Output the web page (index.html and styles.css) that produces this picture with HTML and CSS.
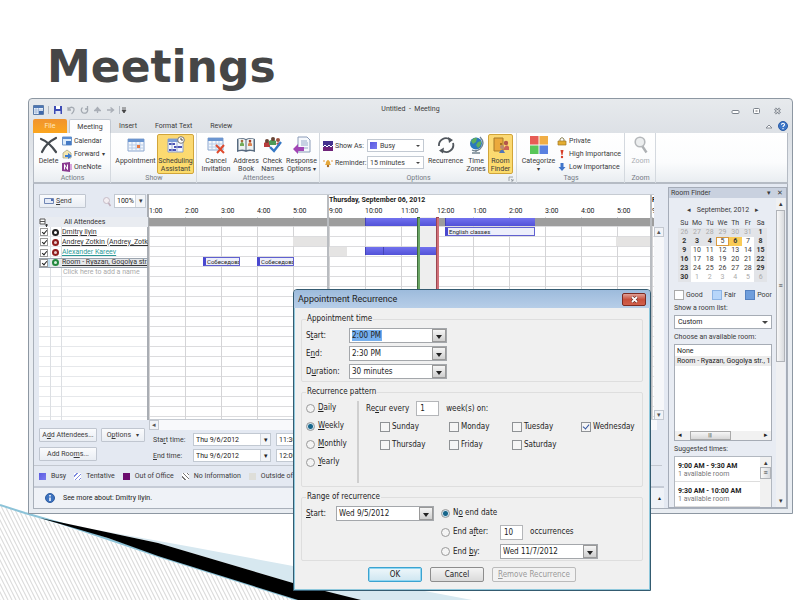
FILE: index.html
```html
<!DOCTYPE html>
<html lang="en">
<head>
<meta charset="utf-8">
<title>Meetings</title>
<link rel="stylesheet" href="styles.css">
</head>
<body>
<main class="slide">
<svg class="swoosh" viewBox="0 0 800 600" preserveAspectRatio="none" aria-hidden="true">
  <defs><pattern id="hatch" width="4" height="8" patternUnits="userSpaceOnUse"><path d="M0 0l4 8M-4 0l4 8M4 0l4 8" stroke="#dcdcdc" stroke-width="1.2"/></pattern></defs>
  <path d="M0 505L45 520L158 557L298 600H0z" fill="url(#hatch)"/>
  <path d="M45 519L81 527L192 547L293 566L472 600H350L158 543z" fill="#d7e8f0"/>
  <path d="M0 505L25 513L60 523L158 556L298 600" fill="none" stroke="#8cc3d8" stroke-width="2"/>
  <path d="M40 518L158 543L293 583L361 600H298L158 556L108 538z" fill="#000"/>
</svg>
<h1 class="title">Meetings</h1>

<section class="window">
  <header class="titlebar">
    <div class="quick">
      <svg width="11" height="10" viewBox="0 0 11 10"><path d="M.5.5h10v9H.5z" fill="#e8f0fa" stroke="#5b7ba8"/><path d="M1 1h9v2H1z" fill="#4d76b3"/><path d="M3 3v6M5.500 3v6M1 5h9M1 7h9" stroke="#8aa5cc" stroke-width=".6"/><path d="M6 6h4v3H6z" fill="#3f68ab"/></svg>
      <i class="bar"></i>
      <svg width="10" height="10" viewBox="0 0 10 10"><path d="M1 1h8v8H1z" fill="#3e4db5"/><path d="M3 1h4v3H3z" fill="#fff"/><path d="M2.500 6h5v3h-5z" fill="#dfe5f7"/></svg>
      <svg width="9" height="10" viewBox="0 0 9 10"><path d="M1 2v3h3M1.500 4.500C3 1 7.500 2 7 5 6.800 7 5.500 8 4.500 9" fill="none" stroke="#a3a9b1" stroke-width="1.300"/></svg>
      <svg width="9" height="10" viewBox="0 0 9 10"><path d="M2.500 2.500A3.200 3.200 0 1 0 6.800 2.800M7.500 1v3H5" fill="none" stroke="#a3a9b1" stroke-width="1.300"/></svg>
      <svg width="9" height="10" viewBox="0 0 9 10"><path d="M1 5.500h7M4.500 3v5M2.500 5l2-2.500 2 2.500" fill="none" stroke="#a9aeb6" stroke-width="1.300"/></svg>
      <svg width="9" height="10" viewBox="0 0 9 10"><path d="M1 5h6M4.500 2.500L7.500 5l-3 2.500" fill="none" stroke="#a9aeb6" stroke-width="1.400"/></svg>
      <i class="bar"></i>
      <svg class="tight" width="6" height="8" viewBox="0 0 6 8"><path d="M1 2h4M1 4h4L3 7z" fill="#444" stroke="#444" stroke-width=".8"/></svg>
    </div>
    <span class="caption">Untitled&nbsp; -&nbsp; Meeting</span>
    <div class="sysbuttons">
      <button type="button" aria-label="Minimize"><svg width="9" height="8"><rect x="1" y="3.500" width="7" height="3" rx="1" fill="#fff" stroke="#7b828b"/></svg></button>
      <button type="button" aria-label="Maximize"><svg width="9" height="8"><rect x="1.500" y="1.500" width="6" height="5" rx="1" fill="#fff" stroke="#7b828b"/><path d="M3.500 4h2" stroke="#666"/></svg></button>
      <button type="button" aria-label="Close"><svg width="9" height="8"><path d="M2 1.500l5 5M7 1.500l-5 5" stroke="#7b828b" stroke-width="2.500"/><path d="M2 1.500l5 5M7 1.500l-5 5" stroke="#fff"/></svg></button>
    </div>
  </header>
  <nav class="tabs">
    <button type="button" class="file">File</button><button type="button" class="on">Meeting</button><button type="button">Insert</button><button type="button">Format Text</button><button type="button">Review</button>
    <span class="help"><svg width="8" height="8"><path d="M1 6l3-3 3 3z" fill="#fff" stroke="#858b94"/></svg><svg width="10" height="10"><circle cx="5" cy="5" r="4.500" fill="#3d77c8" stroke="#2a5ba3"/><path d="M3.500 3.800c0-2 3-2 3-.1 0 1.200-1.500 1-1.500 2.400M5 7v1.200" fill="none" stroke="#fff" stroke-width="1.100"/></svg></span>
  </nav>

  <div class="ribbon">
    <section class="group"><div class="tools actions">
      <button type="button" class="big"><svg width="20" height="18" viewBox="0 0 20 18"><path d="M2 3Q10 6 17 16M17 2Q7 7 3 16" fill="none" stroke="#444a50" stroke-width="2.200" stroke-linecap="round"/></svg>Delete</button>
      <div class="stack">
        <button type="button"><svg width="10" height="10" viewBox="0 0 10 10"><path d="M.5 1h9v8h-9z" fill="#dcecfb" stroke="#6d94c9"/><path d="M.5 1h9v2h-9z" fill="#5b8dd0"/><path d="M4 5h5v4H4z" fill="#4479c4"/></svg>Calendar</button>
        <button type="button"><svg width="10" height="10" viewBox="0 0 10 10"><path d="M1 4l4-3 4 3v5H1z" fill="#f5e7b0" stroke="#9b9b80" stroke-width=".7"/><path d="M3 6h3V4l4 3-4 3V8H3z" fill="#3c7cd0"/></svg>Forward <em>▾</em></button>
        <button type="button"><svg width="10" height="10" viewBox="0 0 10 10"><path d="M0 1l8-1v10l-8-1z" fill="#8b3b91"/><path d="M8 2h2v6H8z" fill="#d9a6dd"/><path d="M2.500 7.500v-5l3 5v-5" fill="none" stroke="#fff"/></svg>OneNote</button>
      </div></div><h2>Actions</h2></section>
    <section class="group"><div class="tools show">
      <button type="button" class="big"><svg width="18" height="18" viewBox="0 0 18 18"><path d="M1 3h16v12H1z" fill="#f3f7fc" stroke="#8aa6cf"/><path d="M1 3h16v3H1z" fill="#6b95d0"/><path d="M5 6v9M9 6v9M13 6v9M1 9h16M1 12h16" stroke="#b8cbe6"/><path d="M10 9h3v3h-3z" fill="#e6783e"/></svg>Appointment</button>
      <button type="button" class="big hot"><svg width="18" height="18" viewBox="0 0 18 18"><path d="M1 3h15v13H1z" fill="#f5f8fd" stroke="#8aa0cc"/><path d="M1 3h15v3H1z" fill="#7a9bd6"/><path d="M2 8h6M7 11h8M2 14h7" stroke="#4b53b5" stroke-width="2"/><path d="M5 6v10M10 6v10" stroke="#a8b6d8"/><circle cx="14" cy="4" r="3.300" fill="#fff" stroke="#777"/><path d="M14 2v2h2" fill="none" stroke="#444"/></svg>Scheduling<br>Assistant</button>
    </div><h2>Show</h2></section>
    <section class="group"><div class="tools attend">
      <button type="button" class="big"><svg width="18" height="18" viewBox="0 0 18 18"><path d="M1 2h15v12H1z" fill="#f3f7fc" stroke="#8aa6cf"/><path d="M1 2h15v3H1z" fill="#6b95d0"/><path d="M5 5v9M9 5v9M12 5v9M1 8h15M1 11h15" stroke="#b8cbe6"/><path d="M9 9l8 8M17 9l-7 8" stroke="#df4a2d" stroke-width="2"/></svg>Cancel<br>Invitation</button>
      <button type="button" class="big"><svg width="18" height="18" viewBox="0 0 18 18"><path d="M0 3q5-2 9 0 4-2 9 0v13q-5-2-9 0-4-2-9 0z" fill="#586b80"/><path d="M1.500 3q4-1 7 1v10q-3-1-7 0zM16.500 3q-4-1-7 1v10q3-1 7 0z" fill="#eef2f2"/><path d="M3 8q2-4 4 0v2H3z" fill="#72ab58"/><path d="M11 8q2-4 4 0v2h-4z" fill="#dc8352"/><circle cx="5" cy="5" r="1.300" fill="#a56a3d"/><circle cx="13" cy="5" r="1.300" fill="#a83d28"/></svg>Address<br>Book</button>
      <button type="button" class="big"><svg width="20" height="18" viewBox="0 0 20 18"><path d="M1 11V7q3-3 6 0v4z" fill="#b83d3d"/><path d="M6 9V5q4-3 7 0v4z" fill="#4d9a58"/><circle cx="4" cy="5" r="2" fill="#674536"/><circle cx="10" cy="3" r="2" fill="#674536"/><circle cx="15" cy="4" r="2" fill="#9c513e"/><path d="M13 8q2-3 4-1v3z" fill="#b64d48"/><path d="M7 11l4 4L18 6" fill="none" stroke="#3578c5" stroke-width="2.400"/></svg>Check<br>Names</button>
      <button type="button" class="big"><svg width="18" height="18" viewBox="0 0 18 18"><path d="M5 1h9l3 3v12H5z" fill="#f6f9fd" stroke="#8b9cb8"/><path d="M8 5h6M8 7h7M8 9h7M11 12h4" stroke="#96aaca"/><path d="M0 13l5-5v3h6v4H5v3z" fill="#a145b5"/></svg>Response<br>Options <em>▾</em></button>
    </div><h2>Attendees</h2></section>
    <section class="group"><div class="tools options">
      <div class="fields">
        <label for="showas"><svg width="10" height="10"><path d="M0 0h10v10H0z" fill="#44328f"/><path d="M0 6h10v4H0z" fill="#6f2379"/><path d="M0 6l2-2 2 2 2-2 2 2 2-2" fill="none" stroke="#fff"/></svg>Show As:</label>
        <span class="pick"><i class="sw busy"></i><select id="showas"><option>Busy</option></select></span>
        <label for="rem"><svg width="10" height="10"><path d="M2 7q1-1 1-3 2-4 4 0 0 2 1 3z" fill="#e5a83b"/><circle cx="5" cy="8" r="1.200" fill="#a96a23"/><path d="M1 2v2M9 2v2" stroke="#e59c45"/></svg>Reminder:</label>
        <span class="pick"><select id="rem"><option>15 minutes</option></select></span>
      </div>
      <button type="button" class="big"><svg width="18" height="18" viewBox="0 0 18 18"><path d="M2 10A7 7 0 0 1 13 3.500M16 7A7 7 0 0 1 5 14.500" fill="none" stroke="#50565d" stroke-width="1.800"/><path d="M11 1l5 3-4 3zM7 11.500l-5 3 4 3z" fill="#50565d"/></svg>Recurrence</button>
      <button type="button" class="big"><svg width="18" height="18" viewBox="0 0 18 18"><circle cx="9" cy="7.500" r="6" fill="#2b78bd"/><path d="M4 5q3-4 6-3l-1 4-3 2zM11 6l3-1q1 4-3 7l-2-3z" fill="#5dae5d"/><path d="M13 1q6 6 0 12-4 3-8 1M9 14v2M5 17h8" fill="none" stroke="#71828e" stroke-width="1.300"/></svg>Time<br>Zones</button>
      <button type="button" class="big hot"><svg width="18" height="18" viewBox="0 0 18 18"><path d="M2 2h9v13H2z" fill="#eba93c" stroke="#a77a29"/><circle cx="9" cy="8" r="1" fill="#8b5e18"/><circle cx="14" cy="7" r="2.200" fill="#b3554b"/><circle cx="10" cy="11" r="2" fill="#b98b72"/><path d="M11 14q3-7 6-3v3z" fill="#cb6257"/><path d="M7 17q3-7 6 0z" fill="#5276b9"/></svg>Room<br>Finder</button>
    </div><h2>Options</h2><svg class="launch" width="6" height="6"><path d="M1 5V1h4M3 3l2 2V3M5 5H3" fill="none" stroke="#8c929b" stroke-width=".8"/></svg></section>
    <section class="group"><div class="tools tags">
      <button type="button" class="big"><svg width="18" height="18"><path d="M0 0h9v9H0z" fill="#e65c55"/><path d="M9 0h9v9H9z" fill="#f0ad45"/><path d="M0 9h9v9H0z" fill="#58c659"/><path d="M9 9h9v9H9z" fill="#5a81e0"/><path d="M9 0v18M0 9h18" stroke="#f6f6f6"/></svg>Categorize<br><em>▾</em></button>
      <div class="stack">
        <button type="button"><svg width="10" height="10"><path d="M3 5V3q2-3 4 0v2" fill="none" stroke="#8b8254"/><path d="M1 5h8v4H1z" fill="#e3ad32" stroke="#9d7624" stroke-width=".7"/></svg>Private</button>
        <button type="button"><svg width="10" height="10"><path d="M3.500 1h3L5.500 6h-1z" fill="#d63e27"/><circle cx="5" cy="8" r="1.200" fill="#d63e27"/></svg>High Importance</button>
        <button type="button"><svg width="10" height="10"><path d="M3.500 1h3v4h2L5 9 1.500 5h2z" fill="#3f75cb"/></svg>Low Importance</button>
      </div></div><h2>Tags</h2></section>
    <section class="group"><div class="tools">
      <button type="button" class="big" disabled><svg width="18" height="18"><circle cx="8" cy="6" r="4.800" fill="#eceeef" stroke="#b5b8bb" stroke-width="1.600"/><path d="M10.500 10.500l4 6" stroke="#aeb1b4" stroke-width="2.400"/></svg>Zoom</button>
    </div><h2>Zoom</h2></section>
  </div>

  <div class="content">
    <div class="main">
      <div class="planner">
        <div class="people">
          <div class="sendbar">
            <button type="button" class="btn send"><svg width="10" height="8"><path d="M.5 1.500h9v5h-9z" fill="#e5ebf7" stroke="#7187b5"/><path d="M7 2h2v2H7z" fill="#4e6cb2"/></svg><span><u>S</u>end</span></button>
            <svg class="lens" width="10" height="11"><circle cx="4.500" cy="4.500" r="3" fill="#f3eef2" stroke="#c6bcc6"/><path d="M6.500 7l2 3" stroke="#c1aebb" stroke-width="1.500"/></svg>
            <span class="pick zoom"><input aria-label="Zoom level" value="100%"><button type="button" aria-label="Zoom list">▾</button></span>
          </div>
          <table class="names">
            <tr class="head"><td><svg width="9" height="9"><path d="M1 1h5v5H1zM1 3.500h5" fill="#fff" stroke="#555"/><path d="M6 7h3M7.500 6v3" stroke="#333"/></svg></td><td></td><th>All Attendees</th></tr>
            <tr><td><input type="checkbox" id="p1" checked></td><td><i class="dot black"></i></td><td><label for="p1">Dmitry Ilyin</label></td></tr>
            <tr><td><input type="checkbox" id="p2" checked></td><td><i class="dot red"></i></td><td><label for="p2">Andrey Zotkin (Andrey_Zotkin</label></td></tr>
            <tr><td><input type="checkbox" id="p3" checked></td><td><i class="dot red"></i></td><td><label for="p3" class="teal">Alexander Kareev</label></td></tr>
            <tr class="sel"><td><input type="checkbox" id="p4" checked></td><td><i class="dot green"></i></td><td><label for="p4">Room - Ryazan, Gogolya str..</label></td></tr>
            <tr><td></td><td></td><td class="hint">Click here to add a name</td></tr>
          </table>
        </div>
        <div class="timeline">
          <div class="day first"><b class="date"></b><div class="hours"><span>1:00</span><span>2:00</span><span>3:00</span><span>4:00</span><span>5:00</span></div>
            <div class="track"><i class="all"></i>
              <i class="off" style="left:144px;top:20px;width:34px"></i>
              <span class="evt" style="left:54px;top:40px;width:37px">Собеседова</span><span class="evt" style="left:108px;top:40px;width:37px">Собеседова</span></div></div>
          <div class="day second"><b class="date">Thursday, September 06, 2012</b><div class="hours"><span>9:00</span><span>10:00</span><span>11:00</span><span>12:00</span><span>1:00</span><span>2:00</span><span>3:00</span><span>4:00</span><span>5:00</span></div>
            <div class="track"><i class="all"></i>
              <i class="off" style="left:0px;top:30px;width:18px"></i><i class="off" style="left:287px;top:20px;width:34px"></i>
              <i class="pickrange"></i>
              <i class="blue" style="left:36px;top:1px;width:72px"></i><i class="blue" style="left:116px;top:1px;width:90px"></i>
              <i class="blue" style="left:36px;top:30px;width:18px"></i><i class="blue" style="left:54px;top:30px;width:54px"></i>
              <span class="evt" style="left:116px;top:10px;width:90px">English classes</span>
              <i class="edge start"></i><i class="edge end"></i></div></div>
          <div class="day last"><b class="date">F</b><div class="hours"><span>9</span></div><div class="track"><i class="all"></i></div></div>
        </div>
        <div class="vscroll"><button type="button" aria-label="Scroll up">▴</button><button type="button" aria-label="Scroll down">▾</button></div>
      </div>
      <div class="below">
        <div class="addbtns">
          <button type="button" class="btn">A<u>d</u>d Attendees...</button><button type="button" class="btn">O<u>p</u>tions &nbsp;&nbsp;<em>▾</em></button>
          <button type="button" class="btn">Add Roo<u>m</u>s...</button>
        </div>
        <div class="times">
          <div class="hscroll"><button type="button" aria-label="Scroll left">◂</button></div>
          <div class="trow"><label for="sd">Sta<u>r</u>t time:</label><span class="pick"><input id="sd" value="Thu 9/6/2012"><button type="button" aria-label="Pick start date">▾</button></span><span class="pick"><input aria-label="Start hour" value="11:30 AM"></span></div>
          <div class="trow"><label for="ed"><u>E</u>nd time:</label><span class="pick"><input id="ed" value="Thu 9/6/2012"><button type="button" aria-label="Pick end date">▾</button></span><span class="pick"><input aria-label="End hour" value="12:00 PM"></span></div>
        </div>
      </div>
      <ul class="legend">
        <li><i class="sw busy"></i>Busy</li><li><i class="sw tent"></i>Tentative</li><li><i class="sw oof"></i>Out of Office</li><li><i class="sw noinf"></i>No Information</li><li><i class="sw outside"></i>Outside of working hours</li>
      </ul>
      <div class="info"><svg width="10" height="10"><circle cx="5" cy="5" r="4.500" fill="#3d73c0" stroke="#2f5d9f"/><path d="M5 2v1.500M5 4.500V8" stroke="#fff" stroke-width="1.500"/></svg>See more about: Dmitry Ilyin.<em>▴</em></div>
    </div>

    <aside class="finder">
      <header>Room Finder<span>▾</span><span>✕</span></header>
      <div class="pane">
        <div class="fcol">
          <div class="month"><span>◂</span>September, 2012<span>▸</span></div>
          <table class="cal">
            <tr><th>Su</th><th>Mo</th><th>Tu</th><th>We</th><th>Th</th><th>Fr</th><th>Sa</th></tr>
            <tr class="past"><td>26</td><td>27</td><td>28</td><td>29</td><td>30</td><td>31</td><td class="b">1</td></tr>
            <tr><td class="b">2</td><td class="b">3</td><td class="b">4</td><td class="today">5</td><td class="cur">6</td><td>7</td><td class="b">8</td></tr>
            <tr><td class="b">9</td><td>10</td><td>11</td><td>12</td><td>13</td><td>14</td><td class="b">15</td></tr>
            <tr><td class="b">16</td><td>17</td><td>18</td><td>19</td><td>20</td><td>21</td><td class="b">22</td></tr>
            <tr><td class="b">23</td><td>24</td><td>25</td><td>26</td><td>27</td><td>28</td><td class="b">29</td></tr>
            <tr class="next"><td class="b">30</td><td>1</td><td>2</td><td>3</td><td>4</td><td>5</td><td class="g">6</td></tr>
          </table>
          <div class="key"><span><i></i>Good</span><span><i class="fair"></i>Fair</span><span><i class="poor"></i>Poor</span></div>
          <label class="flabel" for="rl">Show a room list:</label>
          <span class="roomlist"><select id="rl"><option>Custom</option></select></span>
          <span class="flabel">Choose an available room:</span>
          <div class="rooms"><p>None</p><p class="on">Room - Ryazan, Gogolya str., 1</p><div class="rscroll"><span>◂</span><i>|||</i><span>▸</span></div></div>
          <span class="flabel">Suggested times:</span>
          <div class="suggest"><div><p><b>9:00 AM - 9:30 AM</b>1 available room</p><p><b>9:30 AM - 10:00 AM</b>1 available room</p></div><div class="sscroll"><span>▴</span><i>≡</i></div></div>
        </div>
        <div class="fscroll"><span>▴</span><i>≡</i><span>▾</span></div>
      </div>
    </aside>
  </div>
</section>

<form class="dialog" role="dialog" aria-label="Appointment Recurrence">
  <header>Appointment Recurrence<button type="button" class="close" aria-label="Close"><svg width="9" height="7"><path d="M2 1l5 5M7 1L2 6" stroke="#5d2520" stroke-width="3"/><path d="M2 1l5 5M7 1L2 6" stroke="#fff" stroke-width="1.800"/></svg></button></header>
  <div class="dbody">
    <fieldset class="g1"><legend>Appointment time</legend>
      <label for="ds">S<u>t</u>art:</label><span class="combo"><input id="ds" class="marked" value="2:00 PM"><button type="button" aria-label="Start list"></button></span>
      <label for="de">E<u>n</u>d:</label><span class="combo"><input id="de" value="2:30 PM"><button type="button" aria-label="End list"></button></span>
      <label for="dd">D<u>u</u>ration:</label><span class="combo"><input id="dd" value="30 minutes"><button type="button" aria-label="Duration list"></button></span>
    </fieldset>
    <fieldset class="g2"><legend>Recurrence pattern</legend>
      <div class="freq">
        <label><input type="radio" name="f"><span><u>D</u>aily</span></label><label><input type="radio" name="f" checked><span><u>W</u>eekly</span></label><label><input type="radio" name="f"><span><u>M</u>onthly</span></label><label><input type="radio" name="f"><span><u>Y</u>early</span></label>
      </div>
      <div class="pattern">
        <div class="every"><label for="ev">Re<u>c</u>ur every</label><input id="ev" class="num" value="1"><span>week(s) on:</span></div>
        <div class="days"><label><input type="checkbox">Sunday</label><label><input type="checkbox">Monday</label><label><input type="checkbox">Tuesday</label><label><input type="checkbox" checked>Wednesday</label><label><input type="checkbox">Thursday</label><label><input type="checkbox">Friday</label><label><input type="checkbox">Saturday</label></div>
      </div>
    </fieldset>
    <fieldset class="g3"><legend>Range of recurrence</legend>
      <div class="rstart"><label for="rs"><u>S</u>tart:</label><span class="combo"><input id="rs" value="Wed 9/5/2012"><button type="button" aria-label="Range start list"></button></span></div>
      <div class="rend">
        <label><input type="radio" name="r" checked><span>N<u>o</u> end date</span></label><span></span>
        <label><input type="radio" name="r"><span>End a<u>f</u>ter:</span></label><span class="occ"><input id="oc" class="num" value="10"><label for="oc">occurrences</label></span>
        <label><input type="radio" name="r"><span>End <u>b</u>y:</span></label><span class="combo"><input aria-label="End by date" value="Wed 11/7/2012"><button type="button" aria-label="End date list"></button></span>
      </div>
    </fieldset>
    <div class="dbuttons"><button type="button" class="ok">OK</button><button type="button">Cancel</button><button type="button" class="remove" disabled><u>R</u>emove Recurrence</button></div>
  </div>
</form>
</main>
</body>
</html>
```
FILE: styles.css
```css
* { box-sizing: border-box; }
body { margin: 0; background: #fff; font: 7px/8px Roboto, "Open Sans", sans-serif; color: #3a3a3a; }
button, input, select { font: inherit; color: inherit; margin: 0; padding: 0; border: 0; background: none; border-radius: 0; appearance: none; min-width: 0; }
button { cursor: pointer; white-space: nowrap; }
p, h1, h2, ul, fieldset { margin: 0; padding: 0; }
i, em { font-style: normal; }
em { font-size: 6px; }
svg { flex: none; }

.slide { position: relative; min-height: 100vh; padding: 38px 7px 0 28px; overflow: hidden; }
.swoosh { position: absolute; left: 0; top: 0; width: 100%; height: 100%; }
.title { padding-left: 19px; height: 60px; font: bold 44px/58px "DejaVu Sans", sans-serif; color: #464646; }

/* Meeting window */
.window { position: relative; border: 1px solid #8d97a2; border-radius: 4px 4px 0 0; padding: 0 4px 4px; background: linear-gradient(#e7eaed, #dde1e6 34px, #e9edf2 90px); }
.titlebar { display: grid; grid-template-columns: 1fr auto 1fr; align-items: center; height: 20px; }
.quick { display: flex; align-items: center; gap: 4px; padding-top: 2px; }
.quick .bar { width: 1px; height: 8px; background: #b4bac2; }
.quick .tight { margin-left: -3px; }
.sysbuttons { display: flex; justify-content: flex-end; gap: 12px; padding: 3px 6px 0; }
.sysbuttons button { display: flex; }
.tabs { display: flex; height: 14px; }
.tabs button { padding: 0 8px; margin-right: 2px; }
.tabs .file { width: 34px; padding: 0; color: #ffe9bf; background: linear-gradient(#f0932e, #fba61e); border-radius: 2px 2px 0 0; margin-right: 2px; }
.tabs .on { width: 42px; padding: 0; background: #fdfdfe; border: 1px solid #c3c9d1; border-bottom: 0; border-radius: 2px 2px 0 0; margin-right: 0; }
.help { display: flex; gap: 5px; align-items: center; margin-left: auto; }

.ribbon { display: grid; grid-template-columns: 77px 86px 123px 197px 108px 31px 1fr; height: 51px; background: linear-gradient(#fff, #fbfcfd 60%, #e9edf1); border: 1px solid #b5bbc4; border-width: 0 1px 2px; }
.group { position: relative; display: flex; flex-direction: column; border-right: 1px solid #d4d9df; padding: 1px 2px 0 3px; }
.group h2 { font: 7px/9px Roboto, sans-serif; color: #757b84; text-align: center; }
.tools { display: grid; height: 40px; }
.actions { grid-template-columns: 23px 1fr; gap: 2px; }
.show { grid-template-columns: 43px 37px; }
.attend { grid-template-columns: 32px 28px 25px 33px; }
.options { grid-template-columns: 104px 37px 24px 25px; }
.tags { grid-template-columns: 37px 1fr; }
.big { display: flow-root; align-self: start; line-height: 8px; text-align: center; padding-top: 2px; }
.big svg { display: block; margin: 0 auto 3px; }
.big:disabled { color: #a9adb2; }
.hot { background: linear-gradient(#fbd874, #fcdc6c); border: 1px solid #d1a53a; border-radius: 2px; padding-top: 1px; height: 40px; }
.stack { display: grid; grid-template-rows: repeat(3, 13px); }
.stack button { display: flex; align-items: center; gap: 2px; }
.launch { position: absolute; right: 2px; bottom: 1px; }
.fields { display: grid; grid-template-columns: 44px 57px; grid-template-rows: 13px 13px; row-gap: 4px; padding-top: 5px; }
.fields label { display: flex; align-items: center; gap: 2px; white-space: nowrap; }
.pick { position: relative; display: flex; align-items: center; background: #fff; border: 1px solid #c2c9d2; padding-left: 2px; }
.pick select { flex: 1; padding-left: 0; }
.pick:has(select)::after, .roomlist::after { content: ""; position: absolute; right: 3px; top: 5px; border: 2px solid transparent; border-top-color: #444; pointer-events: none; }
.sw { display: inline-block; flex: none; width: 7px; height: 7px; background: #fff; }
.pick .sw { margin-right: 3px; }
.busy { background: linear-gradient(135deg, #5a5ae0, #7c7cf0); }
.tent { background: repeating-linear-gradient(135deg, #fff 0 2px, #7d8be0 2px 3px); }
.oof { background: #6b0c6e; }
.noinf { background: repeating-linear-gradient(45deg, #fff 0 2px, #777 2px 3px); }
.outside { background: #deded9; }

.content { display: grid; grid-template-columns: 1fr 119px; gap: 4px; background: #e4e9f2; border: solid #a9b0ba; border-width: 0 1px 1px; padding-top: 3px; }
.main { min-width: 0; display: flex; flex-direction: column; padding-top: 7px; }
.planner { display: grid; grid-template-columns: 110px 1fr 10px; padding-left: 5px; height: 226px; }
.sendbar { display: flex; height: 23px; align-items: flex-start; }
.btn { background: linear-gradient(#fafbfd, #e9edf3); border: 1px solid #c0c6d0; border-radius: 1px; }
.send { display: flex; align-items: center; gap: 2px; width: 47px; height: 14px; padding-left: 4px; }
.lens { margin: 2px 2px 0 16px; }
.zoom { width: 32px; height: 14px; }
.zoom input { width: 19px; color: #222; }
.pick button { width: 10px; align-self: stretch; border-left: 1px solid #d3d8df; background: #f3f5f8; margin-left: auto; }
.names { table-layout: fixed; width: 109px; border-collapse: collapse; color: #333; height: 61px; }
.people { background: linear-gradient(90deg, transparent 11px, #dcdfe3 11px 12px, transparent 12px 22px, #dcdfe3 22px 23px, transparent 23px), repeating-linear-gradient(#fff 0 9px, #e6e8eb 9px 10px); background-position: 0 23px; background-repeat: no-repeat; border-right: 2px solid #a9adb3; background-size: 100% 203px; }
.names tr { height: 10px; }
.names td, .names th { padding: 0; height: 10px; line-height: 9px; overflow: hidden; white-space: nowrap; text-align: left; font-weight: normal; vertical-align: middle; }
.names td:first-child { width: 11px; }
.names td:nth-child(2) { width: 12px; }
.names svg, .names input, .names .dot { display: block; }
.names .head { background: #e9ecf1; }
.names .head th { padding-left: 2px; }
.names label { text-decoration: underline; }
.names .teal { color: #2d9a98; }
.names .sel { background: #e6e8eb; outline: 1px solid #9ba4ae; outline-offset: -1px; }
.names .sel td:first-child { background: #bcdcf0; }
.names .hint { color: #aaa; padding-left: 1px; }
input[type=checkbox] { position: relative; width: 8px; height: 8px; margin: 0 1px; background: #fff; border: 1px solid #999; flex: none; }
input[type=checkbox]:checked::after { content: ""; position: absolute; left: 2px; top: 0; width: 2px; height: 4px; border: solid #222; border-width: 0 1px 1px 0; transform: rotate(40deg); }
.dot { width: 7px; height: 7px; margin-left: 2px; border-radius: 50%; border: 2px solid #222; background: #fff; }
.dot.red { border-color: #8f1d1d; background: #e8c8c8; }
.dot.green { border-color: #23883e; background: #d7f0da; }

.timeline { display: grid; grid-template-columns: 178px 321px 1fr; gap: 2px; background: #b9bcc0; border: solid #c6cbd2; border-width: 1px 0; overflow: hidden; color: #222; }
.day { display: flex; flex-direction: column; background: #fff; min-width: 0; overflow: hidden; }
.date { height: 11px; line-height: 11px; white-space: nowrap; }
.hours { display: flex; height: 11px; }
.hours span { flex: none; width: 36px; line-height: 11px; }
.track { position: relative; flex: 1; background: repeating-linear-gradient(90deg, #d4d4d6 0 1px, transparent 1px 36px), repeating-linear-gradient(#fff 0 9px, #dcdcde 9px 10px); }
.track i, .evt { position: absolute; height: 9px; }
.track .all { left: 0; right: 0; top: 1px; height: 8px; background: #9d9d9d; }
.track .off { background: #e5e4e3; }
.track .blue { background: linear-gradient(#7272ee, #5252d8); border: solid #4444b8; border-width: 0 0 0 1px; height: 8px; }
.evt { border: 1px solid #6060d0; border-left: 3px solid #4a48d0; background: #edeffb; font-size: 6px; line-height: 7px; padding-left: 1px; overflow: hidden; white-space: nowrap; }
.track .pickrange { left: 90px; width: 18px; top: 0; height: auto; bottom: 0; background: #eeeeee; }
.track .edge { top: 0; bottom: 0; height: auto; width: 3px; background: #6aa564; border: 1px solid #3f6a3b; border-width: 1px 0 0 1px; }
.track .start { left: 88px; }
.track .end { left: 107px; background: #d07078; border-color: #9c4650; }
.vscroll { display: flex; flex-direction: column; justify-content: space-between; margin-top: 33px; background: #f6f7f9; }
.vscroll button, .hscroll button { width: 10px; height: 10px; border: 1px solid #c3c8d0; background: #f1f3f7; line-height: 8px; color: #555; }

.below { display: grid; grid-template-columns: 114px 1fr; padding-left: 5px; height: 46px; border-bottom: 1px solid #c3c8d0; margin-right: 2px; }
.addbtns { display: grid; grid-template-columns: 58px 44px; grid-template-rows: 14px 14px; gap: 5px 4px; padding-top: 8px; }
.hscroll { height: 10px; width: 508px; margin-left: -4px; background: #f8f9fb; display: flex; }
.times { min-width: 0; }
.trow { display: grid; grid-template-columns: 40px 78px 50px; align-items: center; height: 13px; column-gap: 0; margin-top: 3px; }
.trow .pick { height: 13px; color: #222; }
.trow .pick:last-child { margin-left: 5px; margin-right: -5px; }
.trow input { width: 100%; }
.trow .pick button { flex: none; }
.legend { display: flex; list-style: none; gap: 8px; height: 20px; align-items: center; padding-left: 5px; white-space: nowrap; }
.legend li { display: flex; gap: 5px; align-items: center; }
.info { display: flex; align-items: center; gap: 8px; flex: 1; min-height: 21px; padding: 0 3px 0 11px; background: #eff2f7; border-top: 2px solid #c5cbd6; color: #222; }
.info em { margin-left: auto; }

/* Room finder */
.finder { border: 1px solid #a5acb8; background: #e8ecf3; display: flex; flex-direction: column; height: 321px; }
.finder header { display: flex; height: 10px; background: #c9d1df; padding: 0 3px 0 2px; line-height: 10px; }
.finder header span { margin-left: 6px; }
.finder header span:first-of-type { margin-left: auto; }
.pane { display: flex; flex: 1; min-height: 0; padding-left: 5px; }
.fcol { width: 98px; display: flex; flex-direction: column; }
.month { display: flex; justify-content: center; gap: 6px; line-height: 10px; padding-top: 7px; height: 21px; }
.cal { border-collapse: collapse; table-layout: fixed; width: 89px; margin-left: 4px; }
.cal td, .cal th { padding: 0; height: 9px; line-height: 9px; text-align: center; font-weight: normal; }
.cal td { background: #fff; }
.cal .b, .cal .g, .cal .past td { background: #e2e4e8; }
.cal .b { font-weight: bold; color: #333; }
.cal .past td, .cal .next td { color: #aaa; }
.cal .past .b, .cal .next .b { color: #333; }
.cal .today { outline: 1px solid #d9993e; outline-offset: -1px; }
.cal .cur { background: #f9cb56; font-weight: bold; }
.key { display: flex; justify-content: space-between; margin: 8px 0 2px; }
.key span { display: flex; align-items: center; gap: 2px; }
.key i { width: 10px; height: 10px; background: #fff; border: 1px solid #aaa; }
.key .fair { background: #b7d6fa; border-color: #8db4e4; }
.key .poor { background: #6f9edc; border-color: #5682c0; }
.flabel { line-height: 12px; height: 13px; white-space: nowrap; }
.roomlist { position: relative; display: flex; height: 14px; border: 1px solid #a6acb5; background: #fff; margin-bottom: 2px; color: #222; }
.roomlist select { flex: 1; padding-left: 3px; }
.roomlist::after { border-width: 3px; border-bottom: 0; }
.rooms { display: flex; flex-direction: column; height: 97px; border: 1px solid #a6acb5; background: #fff; color: #222; margin-bottom: 2px; padding-top: 1px; }
.rooms p { padding-left: 2px; line-height: 10px; white-space: nowrap; overflow: hidden; }
.rooms .on { background: #ececec; }
.rscroll { margin-top: auto; height: 9px; display: flex; justify-content: space-between; background: #f1f1f1; padding: 0 3px; }
.rscroll i { width: 41px; margin-right: 26px; border: 1px solid #aaa; text-align: center; line-height: 6px; font-size: 5px; background: linear-gradient(#f7f7f7, #d8d8d8); }
.suggest { flex: 1; min-height: 0; display: flex; border: 1px solid #b2b8c0; border-bottom: 0; background: #fff; overflow: hidden; }
.suggest > div:first-child { flex: 1; }
.suggest p { height: 25px; padding: 5px 0 0 3px; border-bottom: 1px solid #ddd; color: #777; }
.suggest b { display: block; color: #222; }
.sscroll { width: 11px; background: #f1f1f1; text-align: center; padding-top: 2px; }
.sscroll i, .fscroll i { display: flex; align-items: center; justify-content: center; border: 1px solid #b0b3b8; background: linear-gradient(90deg, #f8f8f8, #d9dbde); }
.sscroll i { height: 12px; }
.fscroll { width: 9px; margin-left: auto; margin-right: 1px; background: #eff0f2; text-align: center; display: flex; flex-direction: column; padding: 2px 0; }
.fscroll i { height: 152px; margin: 2px 0 auto; }

/* Recurrence dialog */
.dialog { position: absolute; left: 293px; top: 289px; width: 358px; border: 1px solid #345b70; border-radius: 4px 4px 0 0; background: #f0f0f0; font: 8px/10px "DejaVu Sans Condensed", "DejaVu Sans", sans-serif; color: #222; box-shadow: inset 0 0 0 1px #8fc8dc; }
.dialog header { display: flex; align-items: center; justify-content: space-between; height: 18px; padding: 0 4px; background: linear-gradient(#9dbbdc, #b7cee8); border-radius: 3px 3px 0 0; font: 9px/12px Roboto, sans-serif; }
.close { display: grid; place-items: center; width: 24px; height: 13px; border: 1px solid #7d2b22; border-radius: 2px; background: linear-gradient(#e0a096, #c8503c 50%, #d0604c); }
.dbody { padding: 6px 7px 8px; }
.dialog fieldset { border: 1px solid #dedede; border-radius: 2px; min-width: 0; margin-bottom: 5px; }
.dialog legend { padding: 0 1px; line-height: 10px; }
.dialog .g1 { display: grid; grid-template-columns: 43px 98px; row-gap: 3px; align-items: center; padding: 4px 0 2px 4px; }
.dialog .g2 { display: grid; grid-template-columns: 53px 1fr; padding: 4px 0 3px 4px; }
.dialog .g3 { display: grid; grid-template-columns: 135px 1fr; padding: 4px 0 1px 4px; }
.combo { display: flex; width: 98px; height: 15px; background: #fff; border: 1px solid #a4a7ab; }
.combo input { flex: 1; padding-left: 2px; }
.combo button { position: relative; width: 14px; border: 1px solid #999; background: linear-gradient(#f5f5f5, #cfcfcf); }
.combo button::after { content: ""; position: absolute; left: 3px; top: 5px; border: 3px solid transparent; border-top: 4px solid #222; border-bottom: 0; }
.combo .marked { background: linear-gradient(#76b0ee, #76b0ee) 2px 1px / 30px 11px no-repeat; }
.freq { border-right: 2px solid #cfcfcf; display: grid; grid-template-rows: repeat(4, 18px); height: 82px; }
.freq label, .rend > label { display: flex; align-items: center; gap: 3px; }
.freq label { height: 14px; }
input[type=radio] { width: 9px; height: 9px; border: 1px solid #999; border-radius: 50%; background: #f4f4f4; flex: none; }
input[type=radio]:checked { background: radial-gradient(circle, #17658a 0 2px, #cbe0ec 3px); }
.every { display: flex; align-items: center; gap: 7px; padding-left: 7px; }
.num { width: 23px; height: 15px; border: 1px solid #b4b6b9; background: #fff; padding-left: 3px; }
.days { display: grid; grid-template-columns: 69px 63px 69px 1fr; grid-auto-rows: 18px; padding: 2px 0 0 20px; }
.days label { display: flex; align-items: center; gap: 1px; }
.dialog input[type=checkbox] { width: 10px; height: 10px; border-color: #8f9295; background: #f5f5f5; }
.dialog input[type=checkbox]:checked::after { border-color: #3456a0; height: 5px; width: 3px; }
.rstart { display: grid; grid-template-columns: 30px 98px; align-items: start; line-height: 15px; }
.rend { display: grid; grid-template-columns: 59px 1fr; grid-template-rows: 14px 18px 15px; row-gap: 3px; align-items: center; }
.occ { display: flex; gap: 7px; align-items: center; }
.dbuttons { display: flex; justify-content: center; gap: 8px; padding: 1px 0 0; }
.dbuttons button { width: 54px; height: 15px; border: 1px solid #8d8d8d; border-radius: 2px; background: linear-gradient(#f4f4f4, #dadada); }
.dbuttons .ok { border-color: #3ca3d0; box-shadow: inset 0 0 0 1px #8fd6f2; background: linear-gradient(#eef7fb, #cfe6f1); }
.dbuttons .remove { width: 84px; color: #999; border-color: #bbb; background: #f2f2f2; }
```
